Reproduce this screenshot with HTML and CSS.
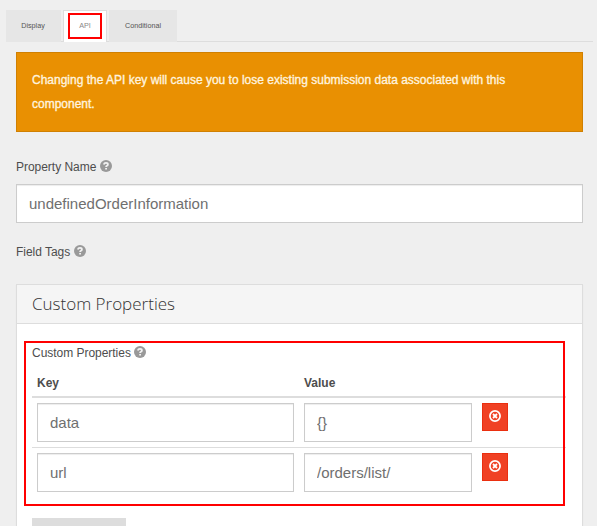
FILE: index.html
```html
<!DOCTYPE html>
<html lang="en">
<head>
<meta charset="utf-8">
<title>Component settings</title>
<link rel="stylesheet" href="styles.css">
</head>
<body>
<svg class="defs" aria-hidden="true">
  <symbol id="help" viewBox="0 0 12 12"><circle cx="6" cy="6" r="6" fill="#999"/><path d="M3.8 4.5Q4.2 2.9 6 2.9Q7.9 2.9 7.9 4.4Q7.9 5.2 6.9 5.8Q6.1 6.2 6.1 7.1M6.1 8v1.6" fill="none" stroke="#f2f2f2" stroke-width="1.8"/></symbol>
  <symbol id="remove" viewBox="0 0 12 12"><circle cx="6" cy="6" r="5.1" fill="none" stroke="#fff" stroke-width="1.7"/><path d="M4 4l4 4M8 4L4 8" stroke="#fff" stroke-width="1.8"/></symbol>
</svg>
<nav class="tabs">
  <a class="tab tab-display"><span>Display</span></a>
  <a class="tab active"><span>API</span></a>
  <a class="tab tab-conditional"><span>Conditional</span></a>
</nav>
<main>
  <div class="alert">Changing the API key will cause you to lose existing submission data associated with this<br>component.</div>
  <label class="label name-label"><span>Property Name</span><svg class="help"><use href="#help"/></svg></label>
  <input class="input" value="undefinedOrderInformation">
  <label class="label tags-label"><span>Field Tags</span><svg class="help"><use href="#help"/></svg></label>
  <section class="panel">
    <h2><span>Custom Properties</span></h2>
    <div class="panel-body">
      <label class="label"><span>Custom Properties</span><svg class="help"><use href="#help"/></svg></label>
      <div class="grid">
        <div class="row head"><span>Key</span><span>Value</span></div>
        <div class="row"><input class="input" value="data"><input class="input" value="{}"><button class="remove" aria-label="Remove"><svg><use href="#remove"/></svg></button></div>
        <div class="row second"><input class="input" value="url"><input class="input" value="/orders/list/"><button class="remove" aria-label="Remove"><svg><use href="#remove"/></svg></button></div>
      </div>
      <div class="add"></div>
      <div class="highlight"></div>
    </div>
  </section>
</main>
</body>
</html>
```
FILE: styles.css
```css
*, *::after { box-sizing: border-box; }
html { overflow: hidden; }
body { margin: 0; height: 526px; overflow: hidden; background: #efefef; color: #4d4d4d; font: 12px "Liberation Sans", Arial, sans-serif; }
.defs { position: absolute; width: 0; height: 0; }
.tabs { display: flex; gap: 2px; height: 32px; margin: 10px 4px 0 6px; background: linear-gradient(#ddd, #ddd) 0 31px / 100% 1px no-repeat; }
.tab { display: flex; align-items: center; justify-content: center; height: 32px; padding-bottom: 1px; background: #e6e6e6; font-size: 7.2px; color: #555; }
.tab-display { width: 55px; padding-right: 1px; }
.tab.active { position: relative; width: 44px; padding-bottom: 2px; background: #fff; border: 1px solid #ddd; border-bottom: 0; color: #888; }
.tab.active::after { content: ""; position: absolute; left: 4px; top: 2px; width: 34px; height: 26px; border: 2px solid #f00; }
.tab-conditional { width: 68px; }
main { margin: 10px 14px 0 16px; }
.alert { height: 80px; padding: 15px; border: 1px solid #d08002; background: #e99002; color: #fff3df; line-height: 24px; letter-spacing: -.005px; -webkit-text-stroke: .35px #fff3df; white-space: nowrap; }
.label { display: flex; align-items: center; height: 16px; line-height: 16px; letter-spacing: -.03px; }
.help { width: 12px; height: 12px; margin-left: 3.5px; position: relative; top: -1px; }
.name-label { margin-top: 27px; }
.tags-label { margin-top: 21px; }
.input { display: block; width: 100%; height: 39px; padding: 0 12px; border: 1px solid #ccc; border-radius: 0; background: #fff; box-shadow: inset 0 1px 1px rgba(0,0,0,.075); color: #6f6f6f; font: 15px "Liberation Sans", Arial, sans-serif; outline: 0; }
.name-label + .input { margin-top: 9px; }
.panel { margin-top: 24px; height: 242px; overflow: hidden; border: 1px solid #ddd; border-bottom: 0; background: #fff; box-shadow: 0 1px 1px rgba(0,0,0,.05); }
.panel h2 { display: flex; align-items: center; margin: 0; height: 39px; padding: 0 0 2px 15px; border-bottom: 1px solid #ddd; background: #f5f5f5; color: #333; font: 300 17px "Open Sans", sans-serif; }
.panel-body { position: relative; padding: 21px 16px 0 15px; }
.grid { width: 534px; margin-top: 7px; }
.row { display: grid; grid-template-columns: 257px 168px 26px; gap: 10px; padding: 5px; height: 50px; }
.row.head { height: 28px; padding: 2px 5px 0; align-items: center; font-weight: bold; }
.row.head + .row { border-top: 2px solid #ddd; height: 51px; }
.row.second { border-top: 1px solid #ddd; height: 51px; }
.remove { display: flex; justify-content: center; width: 26px; height: 28px; padding: 6px 0; border: 1px solid #ea2f10; background: #f04124; }
.remove svg { width: 12px; height: 12px; }
.add { width: 94px; height: 8px; margin-top: 20px; background: #ddd; }
.highlight { position: absolute; left: 7px; top: 17px; width: 541px; height: 165px; border: 2px solid #f00; }
```
